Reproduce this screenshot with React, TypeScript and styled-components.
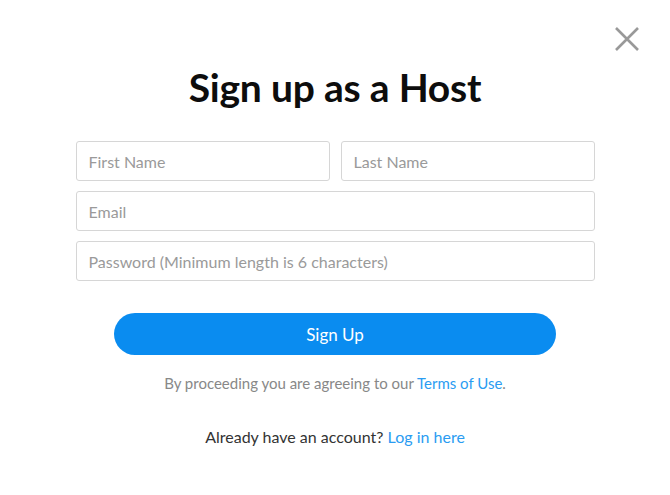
import styled, { createGlobalStyle } from "styled-components";

const GlobalStyle = createGlobalStyle`
  body {
    margin: 0;
    background: #ffffff;
    font-family: Lato, "Liberation Sans", sans-serif;
  }
`;

const Modal = styled.div`
  position: relative;
  width: 670px;
  height: 495px;
  display: flex;
  flex-direction: column;
  align-items: center;
  box-sizing: border-box;
  padding-top: 62px;
`;

const CloseButton = styled.button`
  position: absolute;
  top: 26px;
  right: 30px;
  width: 26px;
  height: 26px;
  padding: 0;
  border: 0;
  background: none;
  cursor: pointer;
`;

const Title = styled.h1`
  margin: 0;
  font-size: 39px;
  line-height: 50px;
  font-weight: 700;
  color: #0d0d0d;
  letter-spacing: -0.2px;
`;

const Form = styled.form`
  width: 519px;
  margin-top: 29px;
  display: flex;
  flex-direction: column;
  gap: 10px;
`;

const Row = styled.div`
  display: grid;
  grid-template-columns: 1fr 1fr;
  gap: 11px;
`;

const Input = styled.input`
  box-sizing: border-box;
  width: 100%;
  height: 40px;
  padding: 0 12px;
  border: 1px solid #d6d6d6;
  border-radius: 3px;
  font-family: inherit;
  font-size: 16px;
  color: #333;
  outline: none;
  &::placeholder {
    color: #9a9a9a;
  }
`;

const SubmitButton = styled.button`
  width: 442px;
  height: 42px;
  margin-top: 32px;
  border: 0;
  border-radius: 21px;
  background: #0a8cf0;
  color: #ffffff;
  font-family: inherit;
  font-size: 17px;
  cursor: pointer;
`;

const Note = styled.p<{ $dark?: boolean }>`
  margin: ${(p) => (p.$dark ? "32px 0 0" : "17px 0 0")};
  font-size: ${(p) => (p.$dark ? "16px" : "15px")};
  line-height: 22px;
  color: ${(p) => (p.$dark ? "#333333" : "#888888")};
`;

const Link = styled.a`
  color: #2a9cf2;
  text-decoration: none;
`;

function CloseIcon() {
  return (
    <svg width="26" height="26" viewBox="0 0 26 26">
      <path
        d="M2 2 L24 24 M24 2 L2 24"
        stroke="#999999"
        strokeWidth="2.6"
        strokeLinecap="butt"
        fill="none"
      />
    </svg>
  );
}

export default function App() {
  return (
    <>
      <GlobalStyle />
      <Modal>
        <CloseButton aria-label="Close">
          <CloseIcon />
        </CloseButton>
        <Title>Sign up as a Host</Title>
        <Form onSubmit={(e) => e.preventDefault()}>
          <Row>
            <Input placeholder="First Name" />
            <Input placeholder="Last Name" />
          </Row>
          <Input type="email" placeholder="Email" />
          <Input
            type="password"
            placeholder="Password (Minimum length is 6 characters)"
          />
        </Form>
        <SubmitButton>Sign Up</SubmitButton>
        <Note>
          By proceeding you are agreeing to our <Link href="#">Terms of Use</Link>.
        </Note>
        <Note $dark>
          Already have an account? <Link href="#">Log in here</Link>
        </Note>
      </Modal>
    </>
  );
}
